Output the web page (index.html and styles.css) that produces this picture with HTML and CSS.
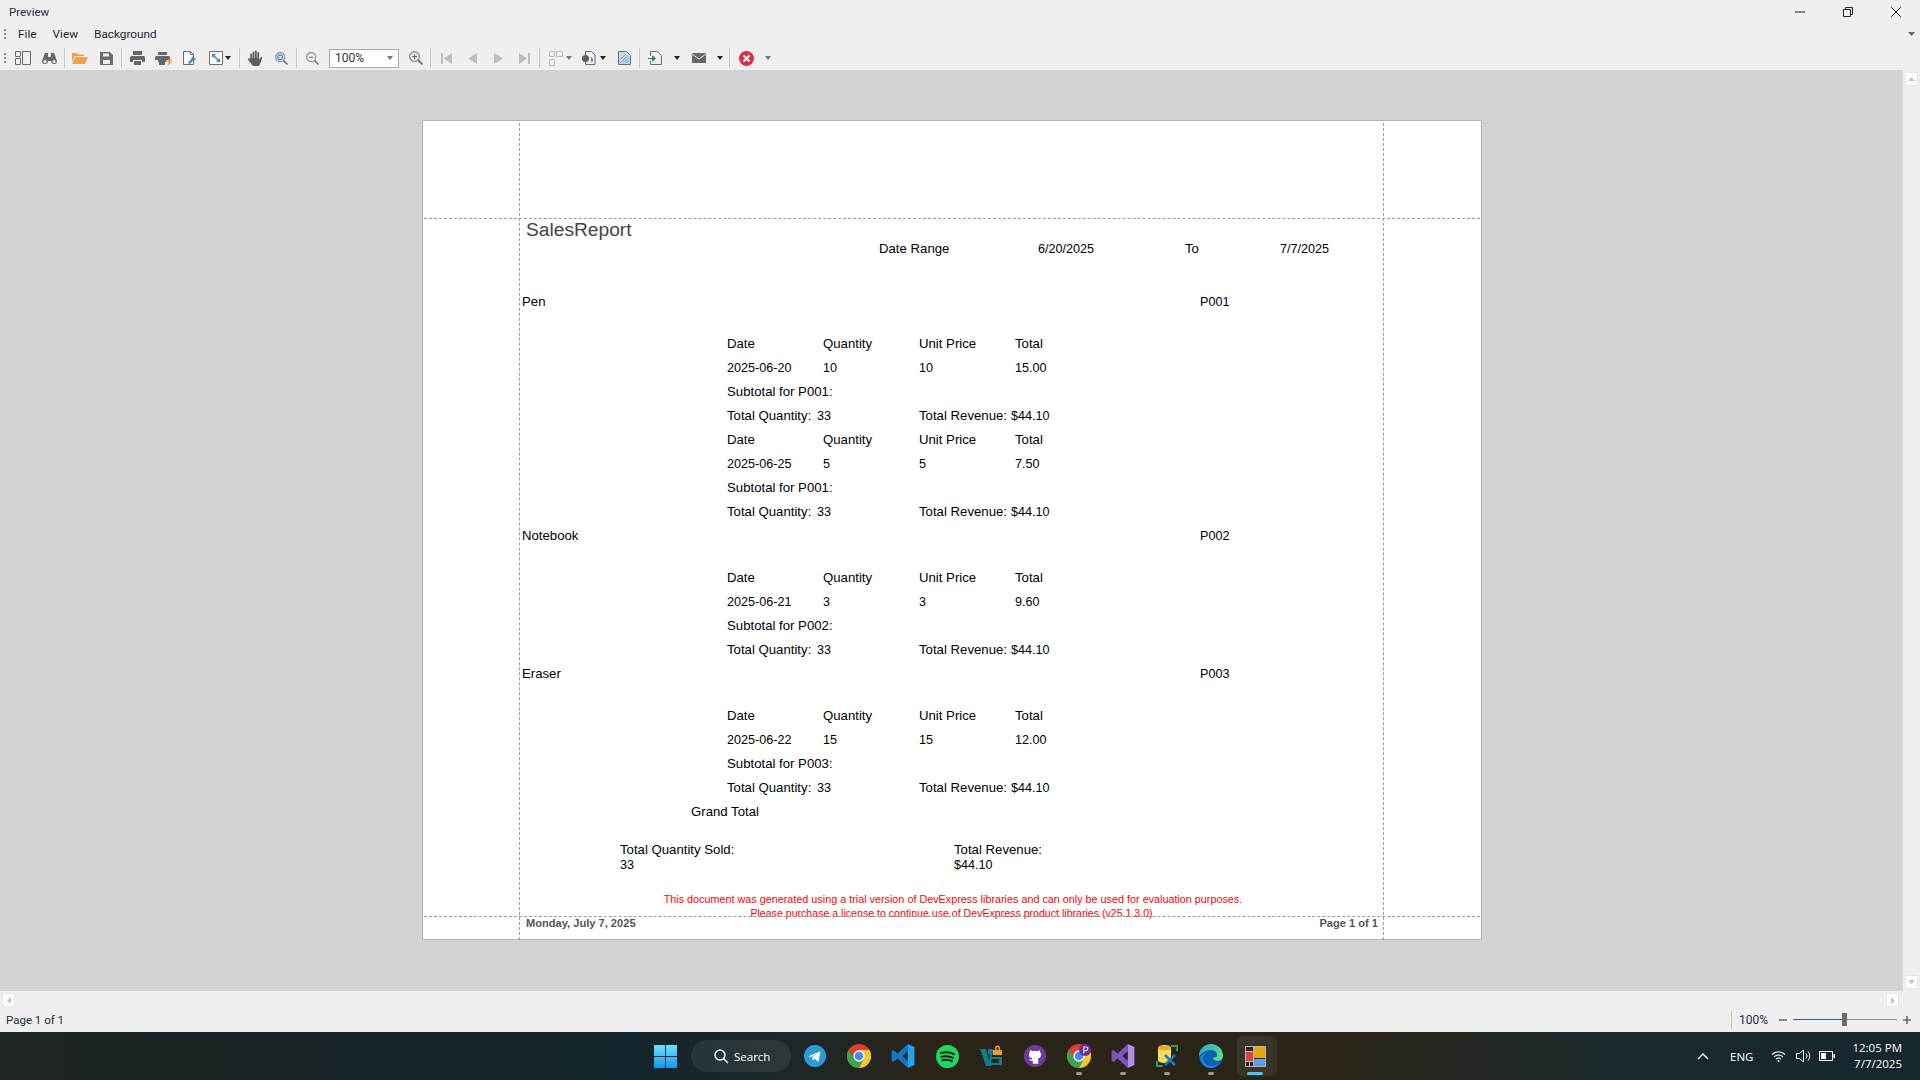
FILE: index.html
```html
<!DOCTYPE html>
<html lang="en">
<head>
<meta charset="utf-8">
<title>Preview</title>
<link rel="stylesheet" href="styles.css">
</head>
<body>
<div class="app">
  <header class="chrome">
    <div class="titlebar">
      <span class="title">Preview</span>
      <div class="winbtns">
        <svg class="wb" width="12" height="12" viewBox="0 0 12 12"><path d="M1 6h10" stroke="#222" fill="none"/></svg>
        <svg class="wb" width="12" height="12" viewBox="0 0 12 12"><path d="M3.500 3V1.500h7v7H9M1.500 3.500h7v7h-7z" stroke="#222" fill="none"/></svg>
        <svg class="wb" width="12" height="12" viewBox="0 0 12 12"><path d="M1 1l10 10M11 1L1 11" stroke="#222" fill="none"/></svg>
      </div>
    </div>
    <div class="menubar">
      <i class="grip"></i>
      <span class="menu">File</span><span class="menu">View</span><span class="menu">Background</span>
      <svg class="menu-caret" width="7" height="4" viewBox="0 0 7 4"><path d="M0 0h7L3.500 4z" fill="#666"/></svg>
    </div>
    <div class="toolbar">
      <i class="grip"></i>
      <span class="btn"><svg width="16" height="14" viewBox="0 0 16 14"><path d="M.5.500h5v5h-5zM.5 7.500h5v6h-5zM7.500.500h8v13h-8z" fill="none" stroke="#6d6d72"/></svg></span>
      <span class="btn"><svg width="15" height="13" viewBox="0 0 15 13"><path d="M3 1h3v4h3V1h3l3 8a3 3 0 1 1-6 0H6a3 3 0 1 1-6 0z" fill="#66666c"/><circle cx="3" cy="9.500" r="1.600" fill="#efefef"/><circle cx="12" cy="9.500" r="1.600" fill="#efefef"/></svg></span>
      <i class="sep"></i>
      <span class="btn"><svg width="16" height="12" viewBox="0 0 16 12"><path d="M0 1h5l1 1.500h6V4H3L0 10z" fill="#f0a04b"/><path d="M3.500 5H16l-3 7H0z" fill="#f0a04b"/></svg></span>
      <span class="btn"><svg width="13" height="13" viewBox="0 0 13 13"><path d="M0 0h10l3 3v10H0z" fill="#6d6d72"/><path d="M3 1.500h6v3H3zM3 8h7v4H3z" fill="#efefef"/></svg></span>
      <i class="sep"></i>
      <span class="btn"><svg width="15" height="14" viewBox="0 0 15 14"><path d="M3 0h9v4H3zM1 5h13l1 1v5h-3V9H3v2H0V6zM4 10h7v4H4z" fill="#66666c"/></svg></span>
      <span class="btn"><svg width="17" height="15" viewBox="0 0 17 15"><path d="M3 1h9v3H3zM1 5h13l1 1v3h-3l-1 2H3v-2H0V6zM4 10h6v4H4z" fill="#66666c"/><path d="M14 8h3l-2 3h2l-5 4 2-4h-2z" fill="#f29a38"/></svg></span>
      <span class="btn"><svg width="13" height="14" viewBox="0 0 13 14"><path d="M.5.500h7l3 3v10h-10zM7.500.500v3h3" fill="#fff" stroke="#6d6d72"/><path d="M12.500 7a2 2 0 0 1-2.500 2.500L6.500 13 5 11.500 8.500 8A2 2 0 0 1 11 5.500L9.500 7l1 1z" fill="#2f7fc4"/></svg></span>
      <span class="btn drop d-scale"><svg width="14" height="14" viewBox="0 0 14 14"><path d="M.5.500h13v13H.5z" fill="#fff" stroke="#6d6d72"/><path d="M3 3h4L5.500 4.500l4 4L11 7v4H7l1.500-1.500-4-4L3 7z" fill="#3b84c6"/></svg><b class="caret dark"></b></span>
      <i class="sep"></i>
      <span class="btn"><svg width="16" height="16" viewBox="0 0 16 16"><path d="M3.200 9V4.500a.9.900 0 0 1 1.800 0V8h.6V2.500a.9.900 0 0 1 1.800 0V8H8V1.500a.9.900 0 0 1 1.800 0V8h.6V3a.9.900 0 0 1 1.800 0v6.500l1.600-2.300c.7-.8 1.900 0 1.300.9L13 14l-1 2H6l-2-2.500L.9 9.500c-.6-.9.5-1.800 1.300-1.100z" fill="#5e5e62"/></svg></span>
      <span class="btn"><svg width="13" height="13" viewBox="0 0 13 13"><circle cx="5.200" cy="5.200" r="4.500" fill="none" stroke="#8d8d92" stroke-width="1.200"/><circle cx="5.200" cy="5.200" r="2.300" fill="none" stroke="#3b84c6" stroke-width="1.200"/><path d="M8.500 8.500l4 4" stroke="#66666c" stroke-width="1.500"/></svg></span>
      <i class="sep"></i>
      <span class="btn"><svg width="13" height="13" viewBox="0 0 13 13"><circle cx="5.200" cy="5.200" r="4.500" fill="none" stroke="#8d8d92" stroke-width="1.200"/><path d="M3 5.200h4.400" stroke="#66666c"/><path d="M8.500 8.500l4 4" stroke="#66666c" stroke-width="1.500"/></svg></span>
      <span class="combo"><span>100%</span><b class="caret light"></b></span>
      <span class="btn"><svg width="14" height="14" viewBox="0 0 13 13"><circle cx="5.200" cy="5.200" r="4.500" fill="none" stroke="#8d8d92" stroke-width="1.200"/><path d="M3 5.200h4.400M5.200 3v4.400" stroke="#66666c"/><path d="M8.500 8.500l4 4" stroke="#66666c" stroke-width="1.500"/></svg></span>
      <i class="sep tight"></i>
      <span class="btn"><svg width="11" height="11" viewBox="0 0 11 11"><path d="M0 0h2v11H0zM11 0v11L3 5.500z" fill="#bdbdbd"/></svg></span>
      <span class="btn"><svg width="9" height="11" viewBox="0 0 9 11"><path d="M9 0v11L0 5.500z" fill="#bdbdbd"/></svg></span>
      <span class="btn"><svg width="9" height="11" viewBox="0 0 9 11"><path d="M0 0v11l9-5.500z" fill="#bdbdbd"/></svg></span>
      <span class="btn"><svg width="11" height="11" viewBox="0 0 11 11"><path d="M11 0H9v11h2zM0 0v11l8-5.500z" fill="#bdbdbd"/></svg></span>
      <i class="sep"></i>
      <span class="btn drop d-multi"><svg width="14" height="15" viewBox="0 0 14 15"><path d="M.5.500h5v5h-5zM7.500.500h6v5h-6zM.5 8.500h5v6h-5z" fill="none" stroke="#bdbdbd"/></svg><b class="caret light"></b></span>
      <span class="btn drop d-mark"><svg width="14" height="14" viewBox="0 0 14 14"><path d="M3.500 4V.500h6l3.500 3.500v9.500H3.500V11" fill="none" stroke="#6d6d72"/><circle cx="3.500" cy="7.500" r="3.500" fill="#5e5e62"/><path d="M9.500 5.500l1.500 3v2H9z" fill="#2f7fc4"/></svg><b class="caret dark"></b></span>
      <span class="btn"><svg width="13" height="14" viewBox="0 0 13 14"><path d="M.5.500h8l4 4v9H.5z" fill="#c4d8ee" stroke="#6d6d72"/><path d="M2 12L10 5M2 9l5-5M5 12l6-5M8 12l3-2.500" stroke="#7ea9da"/></svg></span>
      <i class="sep"></i>
      <span class="btn drop d-exp"><svg width="14" height="14" viewBox="0 0 14 14"><path d="M2.500 5V.500h7l4 4v9h-11V10" fill="none" stroke="#6d6d72"/><path d="M0 7.500h6M4.500 5v5l3-2.500z" stroke="#2a8a4a" fill="#2a8a4a"/></svg><b class="caret dark"></b></span>
      <span class="btn drop d-mail"><svg width="14" height="10" viewBox="0 0 14 10"><path d="M0 0h14v10H0z" fill="#66666c"/><path d="M0 1l7 5 7-5" fill="none" stroke="#efefef"/></svg><b class="caret dark"></b></span>
      <i class="sep"></i>
      <span class="btn drop d-close"><svg width="15" height="15" viewBox="0 0 15 15"><circle cx="7.500" cy="7.500" r="7.500" fill="#d9304a"/><path d="M4.500 4.500l6 6M10.500 4.500l-6 6" stroke="#fff" stroke-width="1.800"/></svg><b class="caret light"></b></span>
    </div>
  </header>

  <main class="workspace">
    <section class="canvas">
      <article class="page">
        <i class="guide v left"></i><i class="guide v right"></i>
        <i class="guide h top"></i><i class="guide h bottom"></i>

        <div class="report-title">SalesReport</div>
        <div class="range">
          <span class="r1">Date Range</span><span class="r2 num">6/20/2025</span><span class="r3">To</span><span class="num">7/7/2025</span>
        </div>

        <div class="prod first"><span class="pname">Pen</span><span class="num">P001</span></div>
        <div class="rows">
          <div class="row"><span>Date</span><span>Quantity</span><span>Unit Price</span><span>Total</span></div>
          <div class="row num"><span>2025-06-20</span><span>10</span><span>10</span><span>15.00</span></div>
          <div class="row"><span>Subtotal for P001:</span></div>
          <div class="sum"><span>Total Quantity:</span><span class="num">33</span><span>Total Revenue:</span><span class="num">$44.10</span></div>
          <div class="row"><span>Date</span><span>Quantity</span><span>Unit Price</span><span>Total</span></div>
          <div class="row num"><span>2025-06-25</span><span>5</span><span>5</span><span>7.50</span></div>
          <div class="row"><span>Subtotal for P001:</span></div>
          <div class="sum"><span>Total Quantity:</span><span class="num">33</span><span>Total Revenue:</span><span class="num">$44.10</span></div>
        </div>

        <div class="prod"><span class="pname">Notebook</span><span class="num">P002</span></div>
        <div class="rows">
          <div class="row"><span>Date</span><span>Quantity</span><span>Unit Price</span><span>Total</span></div>
          <div class="row num"><span>2025-06-21</span><span>3</span><span>3</span><span>9.60</span></div>
          <div class="row"><span>Subtotal for P002:</span></div>
          <div class="sum"><span>Total Quantity:</span><span class="num">33</span><span>Total Revenue:</span><span class="num">$44.10</span></div>
        </div>

        <div class="prod"><span class="pname">Eraser</span><span class="num">P003</span></div>
        <div class="rows">
          <div class="row"><span>Date</span><span>Quantity</span><span>Unit Price</span><span>Total</span></div>
          <div class="row num"><span>2025-06-22</span><span>15</span><span>15</span><span>12.00</span></div>
          <div class="row"><span>Subtotal for P003:</span></div>
          <div class="sum"><span>Total Quantity:</span><span class="num">33</span><span>Total Revenue:</span><span class="num">$44.10</span></div>
        </div>

        <div class="grand">Grand Total</div>
        <div class="totals">
          <div class="tq">Total Quantity Sold:<br><span class="num">33</span></div>
          <div>Total Revenue:<br><span class="num">$44.10</span></div>
        </div>
        <div class="trial">This document was generated using a trial version of DevExpress libraries and can only be used for evaluation purposes.<br><span class="trial2">Please purchase a license to continue use of DevExpress product libraries (v25.1.3.0).</span></div>
        <div class="pagefoot"><span>Monday, July 7, 2025</span><span>Page 1 of 1</span></div>
      </article>
    </section>
    <aside class="vscroll">
      <span class="sb"><svg width="7" height="4" viewBox="0 0 7 4"><path d="M3.500 0L7 4H0z" fill="#c4c4c4"/></svg></span>
      <span class="sb"><svg width="7" height="4" viewBox="0 0 7 4"><path d="M3.500 4L7 0H0z" fill="#c4c4c4"/></svg></span>
    </aside>
  </main>

  <div class="hscroll">
    <span class="sb"><svg width="4" height="7" viewBox="0 0 4 7"><path d="M0 3.500L4 0v7z" fill="#c4c4c4"/></svg></span>
    <span class="sb"><svg width="4" height="7" viewBox="0 0 4 7"><path d="M4 3.500L0 0v7z" fill="#c4c4c4"/></svg></span>
  </div>

  <footer class="status">
    <span class="pageno">Page 1 of 1</span>
    <div class="zoomctl">
      <i class="zsep"></i>
      <span class="zval">100%</span>
      <svg width="8" height="8" viewBox="0 0 8 8"><path d="M0 4h8" stroke="#666" stroke-width="1.500"/></svg>
      <span class="slider"><i class="fill"></i><i class="thumb"></i></span>
      <svg width="8" height="8" viewBox="0 0 8 8"><path d="M0 4h8M4 0v8" stroke="#666" stroke-width="1.500"/></svg>
    </div>
  </footer>

  <nav class="taskbar">
    <div class="tasks">
      <svg class="start" width="23" height="23" viewBox="0 0 24 24"><defs><linearGradient id="w" x1="0" y1="0" x2="0" y2="1"><stop offset="0" stop-color="#6fe0fa"/><stop offset="1" stop-color="#1598f0"/></linearGradient></defs><path d="M0 0h11.500v11.500H0zM12.500 0H24v11.500H12.500zM0 12.500h11.500V24H0zM12.500 12.500H24V24H12.500z" fill="url(#w)"/></svg>
      <span class="search"><svg width="15" height="15" viewBox="0 0 15 15"><circle cx="6" cy="6" r="5" fill="none" stroke="#fff" stroke-width="1.400"/><path d="M9.500 9.500L14 14" stroke="#fff" stroke-width="1.500"/></svg>Search</span>
      <span class="tk"><svg width="22" height="22" viewBox="0 0 20 20"><circle cx="10" cy="10" r="10" fill="#2a9bd8"/><path d="M4 10.200l11-4.500-1.800 9.500-3.700-2.700-1.600 1.700-.4-3 4.500-3.700-5.700 3.300z" fill="#fff"/></svg></span>
      <span class="tk"><svg width="24" height="24" viewBox="0 0 20 20"><circle cx="10" cy="10" r="10" fill="#e0402f"/><path d="M10 20a10 10 0 0 0 8.700-15H10l4 5z" fill="#f6c62c"/><path d="M1.300 5A10 10 0 0 0 10 20l4-7H7z" fill="#3ba44d"/><circle cx="10" cy="10" r="4.700" fill="#fff"/><circle cx="10" cy="10" r="3.600" fill="#4a88ea"/></svg></span>
      <span class="tk"><svg width="24" height="24" viewBox="0 0 20 20"><path d="M14 0v20L5.500 12 2 15 .5 14V6L2 5l3.500 3zM14 6L9.500 10l4.500 4z" fill="#0f78c4"/><path d="M14 0l5.500 2.500v15L14 20z" fill="#27a2ec"/></svg></span>
      <span class="tk"><svg width="23" height="23" viewBox="0 0 20 20"><circle cx="10" cy="10" r="10" fill="#1ed760"/><path d="M4.300 7c4-1.100 8.300-.8 11.400 1M4.800 10.200c3.500-.8 7.200-.5 10 1M5.500 13.200c3-.6 6-.4 8.300 .9" stroke="#14241a" stroke-width="1.700" fill="none" stroke-linecap="round"/></svg></span>
      <span class="tk"><svg width="24" height="24" viewBox="0 0 24 24"><path d="M1 5h6l3 12 1-7h-2V5h5v5h-1l-1 12H7z" fill="#0f7f8f"/><path d="M12 13h11v8H12v-2h8v-4h-8z" fill="#0f7f8f"/><path d="M14 6h9v5h-9zM16 6V4a2.500 2.500 0 0 1 5 0v2h-1.500V4a1 1 0 0 0-2 0v2z" fill="#ef9a2c"/></svg></span>
      <span class="tk"><svg width="22" height="22" viewBox="0 0 20 20"><circle cx="10" cy="10" r="10" fill="#6d3a9e"/><path d="M8 17v-2.500c-2.500.5-3-1-3.500-2 1 .2 1.500 1 2.500 1 0-.7.300-1 .7-1.400C5.500 12 4.500 10.700 4.500 9c0-1 .3-1.700.8-2.300-.1-.6-.1-1.300.2-2 .8 0 1.500.4 2.200.9a7 7 0 0 1 4.600 0c.7-.5 1.400-.9 2.200-.9.3.7.3 1.400.2 2 .5.600.8 1.300.8 2.300 0 1.700-1 3-3.200 3.600.4.400.7 1 .7 1.800V17z" fill="#fff"/></svg></span>
      <span class="tk running"><svg width="24" height="24" viewBox="0 0 20 20"><circle cx="10" cy="10" r="10" fill="#e0402f"/><path d="M10 20a10 10 0 0 0 8.700-15H10l4 5z" fill="#f6c62c"/><path d="M1.300 5A10 10 0 0 0 10 20l4-7H7z" fill="#3ba44d"/><circle cx="10" cy="10" r="4.700" fill="#fff"/><circle cx="10" cy="10" r="3.600" fill="#4a88ea"/><circle cx="15" cy="5" r="5" fill="#6a2f9a"/><path d="M14 8V2.500h1.800a1.500 1.500 0 0 1 0 3H14" fill="none" stroke="#e8d8f4"/></svg></span>
      <span class="tk running"><svg width="24" height="24" viewBox="0 0 20 20"><path d="M14 0v20L5.500 12 2 15 .5 14V6L2 5l3.500 3zM14 6L9.500 10l4.500 4z" fill="#7b56bf"/><path d="M14 0l5.500 2.500v15L14 20z" fill="#b48ce6"/></svg></span>
      <span class="tk running"><svg width="24" height="24" viewBox="0 0 24 24"><path d="M1 23v-6h2v4h5v2zM16 1h7v6h-2V3h-5z" fill="#2f9e58"/><path d="M3 4c0-4 13-4 13 0v12c0 4-13 4-13 0z" fill="#f7dc5e"/><path d="M3 4c0-3 13-3 13 0s-13 3-13 0z" fill="#e8a92c"/><path d="M10 11l10 10M20 11L10 21" stroke="#1677c4" stroke-width="2.500"/></svg></span>
      <span class="tk running"><svg width="24" height="24" viewBox="0 0 20 20"><defs><linearGradient id="eg" x1="0" y1="0" x2="1" y2=".6"><stop offset="0" stop-color="#1ea3e0"/><stop offset="1" stop-color="#5fdc7c"/></linearGradient></defs><circle cx="10" cy="10" r="10" fill="#0b5fb0"/><path d="M10 0a10 10 0 0 1 10 10c0 3-3 4.500-5.500 4-2-.4-3-1.700-3-3 1 .3 3 .3 3.500-1C15.500 7 13 5 10 5 5 5 2 8 0 10 0 4.500 4.500 0 10 0z" fill="url(#eg)"/><path d="M6.500 7C4.500 8 3.500 10 3.500 12c0 4 4 7 9 6 1.500-.2 3-.8 4-1.800-1 2-4 3.800-6.500 3.800-2 0-3-.5-3-.5C3 18 1 14 1 11c1-2 3.500-4 5.500-4z" fill="#1c88d8"/></svg></span>
      <span class="tk active"><svg width="21" height="21" viewBox="0 0 21 21"><path d="M.5.500h20v20H.5z" fill="#2f2a20" stroke="#b5b5b5"/><path d="M.5 5.500h8M.5 15.500h8M4.500 15.500v5M8.500.5v20" fill="none" stroke="#b5b5b5"/><path d="M1 6h7v9H1z" fill="#d8453a"/><path d="M9 1h11v11H9z" fill="#eaa515"/><path d="M9 13h11v7H9z" fill="#5e9ce6"/></svg></span>
    </div>
    <div class="tray">
      <svg class="chev" width="12" height="7" viewBox="0 0 12 7"><path d="M1 6l5-5 5 5" fill="none" stroke="#fff" stroke-width="1.400"/></svg>
      <span class="lang">ENG</span>
      <svg class="ti wifi" width="15" height="12" viewBox="0 0 15 12"><path d="M1 4.500a9 9 0 0 1 13 0M3 7a6 6 0 0 1 9 0M5 9.200a3 3 0 0 1 5 0" fill="none" stroke="#fff" stroke-width="1.100"/><circle cx="7.500" cy="11" r="1" fill="#fff"/></svg>
      <svg class="ti sound" width="16" height="14" viewBox="0 0 16 14"><path d="M.5 4.500h3l4-3.500v12l-4-3.500h-3z" fill="none" stroke="#fff"/><path d="M10 4.500a3.500 3.500 0 0 1 0 5M12 2.500a6.500 6.500 0 0 1 0 9" fill="none" stroke="#fff"/></svg>
      <svg class="ti batt" width="16" height="10" viewBox="0 0 16 10"><path d="M.5.500h13v9H.5z" fill="none" stroke="#fff"/><path d="M2 2h5v6H2zM14.500 3H16v4h-1.500z" fill="#fff"/></svg>
      <div class="clock"><span>12:05 PM</span><span>7/7/2025</span></div>
    </div>
  </nav>
</div>
</body>
</html>
```
FILE: styles.css
```css
* { box-sizing: border-box; }
html, body { margin: 0; height: 100%; overflow: hidden; }
body { font-family: "Liberation Sans", Arial, sans-serif; color: #111; }
i, b { display: block; }

.app { width: 1920px; height: 1080px; display: flex; flex-direction: column; background: #efefef; }

/* window chrome */
.chrome { height: 70px; flex: none; font-family: Roboto, "Noto Sans", sans-serif; color: #222; }
.titlebar { height: 24px; display: flex; align-items: center; justify-content: space-between; padding: 0 0 0 9px; }
.title { font-size: 11.500px; color: #2a2a3a; }
.winbtns { display: flex; gap: 36px; padding-right: 18px; }
.wb { width: 12px; height: 12px; display: block; }
.menubar { height: 20px; margin-bottom: 2px; display: flex; align-items: center; padding-left: 4px; }
.menu { font-size: 11.800px; color: #1f1f30; margin-right: 16px; }
.menu:first-of-type { margin-left: 12px; }
.menu-caret { margin-left: auto; margin-right: 5px; }
.grip { width: 2px; height: 10px; flex: none; background: repeating-linear-gradient(#8a8a8a 0 2px, transparent 2px 4px); }
.toolbar { height: 24px; display: flex; align-items: center; padding-left: 4px; }
.toolbar > .grip { margin-right: 4px; }
.btn { width: 26px; height: 24px; flex: none; display: flex; align-items: center; justify-content: center; }
.btn svg { display: block; flex: none; }
.sep { width: 1px; height: 20px; flex: none; background: #c6c6c6; margin: 0 2px; }
.sep.tight { margin-left: 1px; }
.drop { justify-content: flex-start; }
.d-scale { width: 35px; padding-left: 7px; gap: 2px; }
.d-multi { width: 33px; padding-left: 7px; gap: 3px; }
.d-mark { width: 36px; padding-left: 7px; gap: 4px; }
.d-exp { width: 41px; padding-left: 6px; gap: 12px; }
.d-mail { width: 44px; padding-left: 9px; gap: 11px; }
.d-close { width: 42px; padding-left: 7px; gap: 11px; }
.caret { width: 0; height: 0; flex: none; border: 3.500px solid transparent; border-bottom: 0; border-top: 4px solid #222; }
.caret.light { border-top-color: #777; }
.caret.dark { border-top-color: #222; }
.combo { width: 70px; height: 19px; flex: none; margin-left: 4px; margin-right: 4px; background: #fff; border: 1px solid #a9a9a9; display: flex; align-items: center; justify-content: space-between; padding: 0 5px; font-size: 12px; color: #333; }

/* workspace */
.workspace { height: 921px; flex: none; display: flex; }
.canvas { flex: 1; background: #d2d2d2; padding: 50px 0 0 422px; }
.vscroll { width: 17px; flex: none; background: #efefef; display: flex; flex-direction: column; justify-content: space-between; padding: 2px; }
.sb { width: 13px; height: 14px; background: #fff; border: 1px solid #e6e6e6; display: flex; align-items: center; justify-content: center; }
.hscroll { height: 18px; flex: none; display: flex; justify-content: space-between; align-items: center; padding: 0 21px 0 2px; }

/* report page */
.page { width: 1060px; height: 820px; background: #fff; border: 1px solid #b3b3b3; position: relative; padding-top: 97px; font-size: 13.200px; line-height: 14px; color: #000; }
.num { font-size: 12.600px; }
.guide { position: absolute; border: 0 dashed #9b9b9b; }
.guide.v { top: 2px; height: 817px; border-left-width: 1px; }
.guide.left { left: 96px; }
.guide.right { left: 960px; }
.guide.h { left: 1px; width: 1056px; border-top-width: 1px; }
.guide.top { top: 97px; }
.guide.bottom { top: 795px; }
.report-title { height: 19px; margin-left: 103px; font-size: 19.200px; line-height: 24px; color: #444; }
.range { height: 24px; margin-left: 456px; padding-top: 5px; display: flex; align-items: baseline; }
.r1 { width: 159px; }
.r2 { width: 147px; }
.r3 { width: 95px; }
.prod { height: 24px; display: flex; align-items: baseline; padding: 5px 0 0 99px; }
.prod.first { margin-top: 29px; }
.pname { width: 678px; }
.rows { margin: 18px 0 0 304px; }
.row { height: 24px; padding-top: 5px; display: grid; grid-template-columns: 96px 96px 96px 96px; align-items: baseline; }
.row > span:only-child { white-space: nowrap; }
.sum { height: 24px; padding-top: 5px; display: grid; grid-template-columns: 90px 102px 92px 96px; align-items: baseline; }
.grand { height: 24px; line-height: 24px; margin-left: 268px; }
.totals { display: grid; grid-template-columns: 334px 200px; margin: 18px 0 0 197px; line-height: 15px; }
.trial { margin-top: 19px; padding-left: 2px; text-align: center; font-size: 10.800px; line-height: 14px; color: #f00; }
.trial2 { font-size: 10.600px; }
.pagefoot { position: absolute; left: 103px; top: 795px; width: 852px; display: flex; justify-content: space-between; font-size: 11.100px; line-height: 14px; font-weight: bold; color: #555; }

/* status bar */
.status { height: 23px; flex: none; display: flex; justify-content: space-between; align-items: center; padding: 0 0 2px 6px; font-family: Roboto, "Noto Sans", sans-serif; font-size: 11.500px; color: #2a2a3a; }
.zoomctl { display: flex; align-items: center; height: 100%; padding-right: 9px; }
.zsep { width: 1px; height: 18px; background: #c6c6c6; margin-right: 7px; }
.zval { width: 33px; margin-right: 7px; font-size: 12px; }
.slider { width: 104px; height: 13px; margin: 0 6px; position: relative; display: block; background: linear-gradient(#8f8f8f, #8f8f8f) center / 100% 1px no-repeat; }
.fill { position: absolute; left: 0; top: 6px; width: 52px; height: 1px; background: #3f5f9f; }
.thumb { position: absolute; left: 49px; top: 0; width: 5px; height: 13px; background: #6b6b6b; }

/* taskbar */
.taskbar { height: 48px; flex: none; display: flex; justify-content: space-between; align-items: center; padding-left: 654px; color: #fff; background: linear-gradient(90deg, #1f2523 0, #14262d 33%, #1d2828 42%, #2b2519 48%, #2a2419 70%, #1a2a2e 85%, #16272e 100%); font-family: "Open Sans", "Noto Sans", sans-serif; }
.tasks { display: flex; align-items: center; }
.start { display: block; margin-right: 14px; }
.search { width: 100px; height: 32px; flex: none; margin-right: 2px; border-radius: 16px; background: rgba(255,255,255,.07); display: flex; align-items: center; gap: 5px; padding-left: 23px; font-size: 11.500px; white-space: nowrap; }
.tk { width: 44px; height: 48px; flex: none; position: relative; display: flex; align-items: center; justify-content: center; }
.tk svg { display: block; position: relative; }
.tk.running::after { content: ""; position: absolute; left: 19px; bottom: 5px; width: 6px; height: 3px; border-radius: 2px; background: #9a9a9a; }
.tk.active::before { content: ""; position: absolute; left: 4px; top: 4px; width: 36px; height: 40px; border-radius: 5px; background: rgba(255,255,255,.08); box-shadow: 4px 0 0 rgba(255,255,255,.05); }
.tk.active::after { content: ""; position: absolute; left: 14px; bottom: 5px; width: 16px; height: 3px; border-radius: 2px; background: #4fc3f7; }
.tray { display: flex; align-items: center; padding-right: 18px; }
.chev { margin-right: 21px; display: block; }
.lang { font-size: 11.500px; width: 26px; margin-right: 15px; }
.ti { display: block; }
.wifi { margin-right: 10px; }
.sound { margin-right: 7px; }
.clock { display: flex; flex-direction: column; align-items: flex-end; font-size: 11.500px; line-height: 16px; margin-left: 13px; width: 54px; white-space: nowrap; }
```
